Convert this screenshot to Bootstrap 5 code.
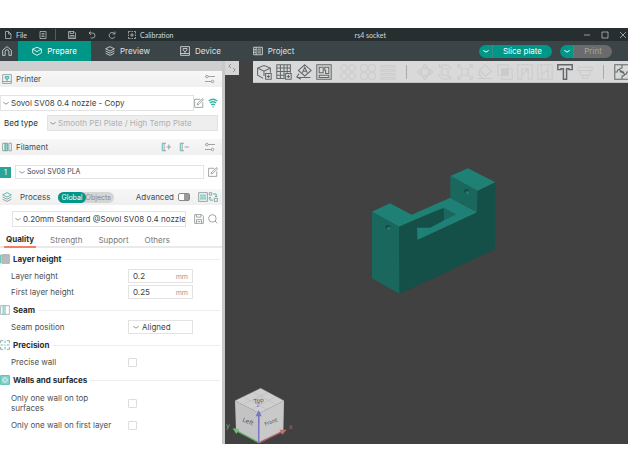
<!DOCTYPE html>
<html lang="en">
<head>
<meta charset="utf-8">
<meta name="viewport" content="width=device-width, initial-scale=1">
<title>rs4 socket</title>
<link href="https://cdn.jsdelivr.net/npm/bootstrap@5.3.0/dist/css/bootstrap.min.css" rel="stylesheet">
<style>
body{font-family:Inter,"Open Sans",sans-serif;font-size:8px;line-height:12px;color:#4a5055;background:#fff;min-height:100vh;padding:28px 0;overflow-x:hidden}
svg{display:block;flex:none}
.ico{width:10px;height:10px;fill:none;stroke:currentColor;stroke-width:1.3}
.ico-lg{width:16px;height:16px;stroke-width:1.3}
.chev{width:6px;height:4px;fill:none;stroke:#999;stroke-width:1}
.teal{stroke:#35b3a6}
button{border:0;background:none;padding:0;color:inherit;line-height:12px}
.titlebar{height:13px;background:#262e30;color:#d5d8d8;font-family:Lato,sans-serif;font-size:7px;padding:0 1px 0 4px}
.titlebar .ico{width:8px;height:8px}
.titlebar .start{gap:12px}
.titlebar .wins{gap:10px}
.vline{width:1px;height:11px;background:#555c5e}
.titlebar .vline{margin-left:-4px}
.tabsbar{height:20px;background:#3b4446;color:#dfe2e2}
.tabsbar .home{width:18px}
.maintab{width:73px;gap:5px}
.maintab.active{background:#009688;color:#fff}
.pill{height:13px;border-radius:7px;overflow:hidden;color:#fff}
.pill .chev{stroke:#fff}
.pill .drop{width:14px;background:#009688;border-right:1px solid #3b8f87}
.pill .act{background:#009688;width:59px}
.pill.off .act{background:#6b6b6b;color:#a5a5a5;width:38px}
.side{width:225px;border-right:3px solid #c9c9c9;background:#fff}
.strip{height:10px;background:#cfcfcf}
.phead{height:16px;background:linear-gradient(#f7f7f7,#efefef);padding:0 7px 0 2px;color:#444b50}
.phead .ico,.mut{color:#8b9194}
.after-head{margin-top:10px}
.tight{margin-top:6px}
.cbox{border:1px solid #e3e3e3;background:#fff;height:14px;gap:2px;padding-left:2px}
.cbox.tall{height:16px}
.cbox select,.cbox input{appearance:none;border:0;background:transparent;padding:0;color:#3c4347;font-size:inherit;line-height:12px;height:12px;min-width:0;flex:1;width:100%;outline:0;opacity:1}
.cbox.off{background:#eee}
.cbox.off select{color:#aeb1b3}
.cbox.fil{font-size:7px;padding-left:3px}
.bed-label{width:43px;color:#262e30}
.swatch{width:11px;height:11px;background:#26a69a;color:#fff;font-size:7px;line-height:11px}
.seg{background:#d5d5d5;border-radius:6px;height:11px;font-size:7px;color:#888}
.seg button{line-height:11px;padding-right:3px}
.seg .on{background:#009688;color:#fff;border-radius:6px;padding:0 3px}
.toggle{appearance:none;width:12px;height:8px;border-radius:2px;border:1px solid #888;background:linear-gradient(90deg,#fff 5px,#999 5px);margin:0}
.qtabs{height:17px;border-bottom:2px solid #eaeaea;padding-left:4px;gap:12px;color:#777;margin:4px 0 1px}
.qtabs button{height:17px;padding:0 2px}
.qtabs .on{color:#262e30;font-weight:700;border-bottom:2px solid #f28068}
.group{padding-top:2px}
.shead{height:16px;gap:3px;color:#262e30;font-weight:700;margin-bottom:1px}
.shead::after{content:"";flex:1;height:1px;background:#eee;margin-right:2px}
.frow{min-height:16px;padding-left:11px}
.frow label{width:117px;padding-right:20px;line-height:10px}
.frow .wide{padding-right:0}
.field{width:65px;padding:0 4px}
.field select{margin-left:1px}
.unit{font-size:7px;color:#999;align-self:end;line-height:10px}
.tick{appearance:none;width:9px;height:9px;border:1px solid #ddd;border-radius:1px;margin:0}
.view{background:#404140}
.collapse-btn{width:14px;height:14px;background:#d6d6d6;color:#777}
.tools{height:22px;background:#d9d9d9;color:#62686a;margin-left:14px;border-bottom:1px solid #c2c2c2;gap:4px;padding-left:3px;overflow:hidden}
.tools .dim{color:#cbcbcb}
.tools .vline{background:#aaa;height:14px;margin:0 6px}
.model{position:absolute;left:33.5%;top:26%;width:145px;height:140px}
.cube{position:absolute;left:0;bottom:0;width:85px;height:64px;font-family:"DejaVu Sans",sans-serif}
</style>
<script src="https://cdn.jsdelivr.net/npm/bootstrap@5.3.0/dist/js/bootstrap.bundle.min.js"></script>
</head>
<body class="d-flex flex-column">
<svg width="0" height="0" class="position-absolute" aria-hidden="true">
<symbol id="chev" viewBox="0 0 6 4"><path d="M.5 1Q1.500 3 3 3T5.500 1"/></symbol>
<symbol id="file" viewBox="0 0 16 16"><path d="M3 1h6l5 5v9H3zM9 1v5h5"/></symbol>
<symbol id="menu" viewBox="0 0 16 16"><path d="M2 1h12v14H2zM5 5h6M5 8h6M5 11h6"/></symbol>
<symbol id="save" viewBox="0 0 16 16"><path d="M1 1h11l3 3v11H1zM4 1v4h7V1M4 15V9h8v6M6 12h4"/></symbol>
<symbol id="undo" viewBox="0 0 16 16"><path d="M6 1 2 4l4 4M2 4h7a5 5 0 0 1 0 10H5"/></symbol>
<symbol id="redo" viewBox="0 0 16 16"><path d="M13 5A6 6 0 1 0 14 11M14 1v5H9"/></symbol>
<symbol id="calib" viewBox="0 0 16 16"><path d="M1 5V1h4M7 1h3M12 1h3v4M15 7v3M15 12v3h-3M10 15H7M5 15H1v-3M1 10V7M8 4v8M4 8h8"/></symbol>
<symbol id="home" viewBox="0 0 16 16"><path d="M1 7l7-6 7 6v8h-4V9a3 3 0 0 0-6 0v6H1z"/></symbol>
<symbol id="box" viewBox="0 0 16 16"><path d="M8 2l7 3v6l-7 4-7-4V5zM1 5l7 4 7-4"/></symbol>
<symbol id="layers" viewBox="0 0 16 16"><path d="M8 1l7 3.500-7 3.500-7-3.500zM1 8l7 3.500L15 8M1 11.500 8 15l7-3.500"/></symbol>
<symbol id="printer" viewBox="0 0 16 16"><path d="M1 1h14v14H1zM1 12h14M5 4h6v3L8 9 5 7zM8 9v3"/></symbol>
<symbol id="project" viewBox="0 0 16 16"><path d="M1 2h14v12H1zM5 2v12M1 6h4M1 10h4M7 5h6M7 8h6M7 11h6"/></symbol>
<symbol id="sliders" viewBox="0 0 16 16"><path d="M5 4h11M0 4h1M0 12h10"/><circle cx="3" cy="4" r="2"/><circle cx="12" cy="12" r="2"/></symbol>
<symbol id="edit" viewBox="0 0 16 16"><path d="M10 2H1v13h13V7M5 11l1-3 8-7 1 2-7 7z"/></symbol>
<symbol id="search" viewBox="0 0 16 16"><circle cx="7" cy="7" r="6"/><path d="M11 11l4 4"/></symbol>
</svg>

<header>
<div class="titlebar d-flex align-items-center">
 <div class="start d-flex align-items-center">
 <button class="d-flex align-items-center"><svg class="ico"><use href="#file"/></svg><span class="ps-1">File</span></button>
 <button aria-label="Menu"><svg class="ico"><use href="#menu"/></svg></button>
 <span class="vline"></span>
 <button aria-label="Save"><svg class="ico"><use href="#save"/></svg></button>
 <button aria-label="Undo"><svg class="ico"><use href="#undo"/></svg></button>
 <button aria-label="Redo"><svg class="ico"><use href="#redo"/></svg></button>
 <button class="d-flex align-items-center gap-1"><svg class="ico"><use href="#calib"/></svg>Calibration</button>
 </div>
 <span class="flex-fill text-center pe-3">rs4 socket</span>
 <div class="wins d-flex">
 <button aria-label="Minimize"><svg class="ico" viewBox="0 0 16 16"><path d="M2 8h12"/></svg></button>
 <button aria-label="Maximize"><svg class="ico" viewBox="0 0 16 16"><path d="M2 2h12v12H2z"/></svg></button>
 <button aria-label="Close"><svg class="ico" viewBox="0 0 16 16"><path d="M2 2l12 12M14 2 2 14"/></svg></button>
 </div>
</div>
<nav class="tabsbar d-flex align-items-stretch">
 <button class="home d-flex align-items-center justify-content-center pe-1" aria-label="Home"><svg class="ico"><use href="#home"/></svg></button>
 <button class="maintab active d-flex align-items-center justify-content-center"><svg class="ico"><use href="#box"/></svg>Prepare</button>
 <button class="maintab d-flex align-items-center justify-content-center"><svg class="ico"><use href="#layers"/></svg>Preview</button>
 <button class="maintab d-flex align-items-center justify-content-center"><svg class="ico"><use href="#printer"/></svg>Device</button>
 <button class="maintab d-flex align-items-center justify-content-center"><svg class="ico"><use href="#project"/></svg>Project</button>
 <div class="d-flex align-items-center gap-2 ms-auto pe-3">
  <div class="pill d-flex"><button class="drop d-flex align-items-center justify-content-center" aria-label="Slice options"><svg class="chev"><use href="#chev"/></svg></button><button class="act">Slice plate</button></div>
  <div class="pill off d-flex"><button class="drop d-flex align-items-center justify-content-center" aria-label="Print options"><svg class="chev"><use href="#chev"/></svg></button><button class="act">Print</button></div>
 </div>
</nav>
</header>

<main class="d-flex flex-fill">
<aside class="side flex-shrink-0">
 <div class="strip"></div>
 <div class="phead d-flex align-items-center"><svg class="ico" viewBox="0 0 16 16"><path d="M1 1h14v14H1zM1 12h14"/><path class="teal" fill="#8bd3cb" d="M5 4h6v3L8 9 5 7zM8 9v3"/></svg><span class="ps-1">Printer</span><button class="ms-auto" aria-label="Printer settings"><svg class="ico"><use href="#sliders"/></svg></button></div>
 <div class="d-flex align-items-center pe-1 mt-2 mut">
  <div class="cbox tall d-flex align-items-center flex-fill"><svg class="chev"><use href="#chev"/></svg><select aria-label="Printer preset"><option>Sovol SV08 0.4 nozzle - Copy</option></select></div>
  <button aria-label="Edit printer"><svg class="ico"><use href="#edit"/></svg></button>
  <button class="ms-1" aria-label="Connection"><svg class="ico teal" viewBox="0 0 16 16"><path stroke-width="2" d="M1 5q7-6 14 0M3 8q5-4 10 0M5 11q3-2 6 0M7 14h2"/></svg></button>
 </div>
 <div class="d-flex align-items-center pe-1 pt-1">
  <label for="bed" class="bed-label ps-1 me-1 text-nowrap">Bed type</label>
  <div class="cbox tall off d-flex align-items-center flex-fill"><svg class="chev"><use href="#chev"/></svg><select id="bed" disabled><option>Smooth PEI Plate / High Temp Plate</option></select></div>
 </div>
 <div class="phead d-flex align-items-center mt-2"><svg class="ico" viewBox="0 0 16 16"><path d="M1 2h4v12H1zM11 2h4v12h-4z"/><path class="teal" fill="#8bd3cb" d="M5 2h4v12H5z"/></svg><span class="ps-1">Filament</span>
  <button class="ms-auto" aria-label="Add filament"><svg class="ico" viewBox="0 0 16 16"><path class="teal" d="M5 2H2v12h3"/><path d="M8 2H5v12h3M9 8h7M12.500 4v8"/></svg></button>
  <button class="ms-2" aria-label="Remove filament"><svg class="ico" viewBox="0 0 16 16"><path class="teal" d="M5 2H2v12h3"/><path d="M8 2H5v12h3M9 8h7"/></svg></button>
  <button class="ms-3" aria-label="Filament settings"><svg class="ico"><use href="#sliders"/></svg></button></div>
 <div class="d-flex align-items-center pe-1 after-head mut">
  <span class="swatch text-center me-1">1</span>
  <div class="cbox fil d-flex align-items-center flex-fill me-1"><svg class="chev"><use href="#chev"/></svg><select aria-label="Filament preset"><option>Sovol SV08 PLA</option></select></div>
  <button aria-label="Edit filament"><svg class="ico"><use href="#edit"/></svg></button>
 </div>
 <div class="phead d-flex align-items-center after-head pe-1"><svg class="ico" viewBox="0 0 16 16"><path d="M1 8l7 3.500L15 8M1 11.500 8 15l7-3.500"/><path class="teal" d="M8 1l7 3.500-7 3.500-7-3.500z"/></svg><span class="ps-1 ms-1">Process</span>
  <div class="seg d-flex ms-2"><button class="on">Global</button><button>Objects</button></div>
  <label class="ms-auto" for="adv">Advanced</label><input type="checkbox" class="toggle ms-1" id="adv">
  <button class="ms-2" aria-label="Compare"><svg class="ico" viewBox="0 0 16 16"><path d="M1 1h14v14H1z"/><path class="teal" d="M3 5h10M3 8h10M3 11h10"/></svg></button>
  <button aria-label="Transfer"><svg class="ico" viewBox="0 0 16 16"><path d="M2 1h4v4H2zM10 10h5v5h-5z"/><path class="teal" d="M8 3h5v5M11 6l2 2 2-2M8 13H3V8M1 10l2-2 2 2"/></svg></button>
 </div>
 <div class="d-flex align-items-center tight mut ps-2 pe-1">
  <div class="cbox tall d-flex align-items-center flex-fill ms-1 me-2"><svg class="chev"><use href="#chev"/></svg><select aria-label="Process preset"><option>0.20mm Standard @Sovol SV08 0.4 nozzle</option></select></div>
  <button class="me-1" aria-label="Save preset"><svg class="ico"><use href="#save"/></svg></button><button aria-label="Search"><svg class="ico"><use href="#search"/></svg></button>
 </div>
 <div class="qtabs d-flex"><button class="on">Quality</button><button>Strength</button><button>Support</button><button>Others</button></div>

 <section class="group">
  <div class="shead d-flex align-items-center"><svg class="ico" viewBox="0 0 16 16"><path fill="#b8bcbd" stroke="#a5aaab" d="M3 1h12v14H3z"/><path class="teal" d="M1 1v14"/></svg>Layer height</div>
  <div class="frow d-flex align-items-center"><label for="lh">Layer height</label><div class="cbox field d-flex"><input id="lh" type="text" value="0.2"><span class="unit">mm</span></div></div>
  <div class="frow d-flex align-items-center"><label for="flh">First layer height</label><div class="cbox field d-flex"><input id="flh" type="text" value="0.25"><span class="unit">mm</span></div></div>
 </section>
 <section class="group">
  <div class="shead d-flex align-items-center"><svg class="ico" viewBox="0 0 16 16"><path stroke="#a5aaab" d="M1 1h14v14H1z"/><path class="teal" d="M5 1v14M8 1v14"/></svg>Seam</div>
  <div class="frow d-flex align-items-center"><label for="seam">Seam position</label><div class="cbox field d-flex align-items-center"><svg class="chev"><use href="#chev"/></svg><select id="seam"><option>Aligned</option></select></div></div>
 </section>
 <section class="group">
  <div class="shead d-flex align-items-center"><svg class="ico" viewBox="0 0 16 16"><path stroke="#8b9194" d="M1 5V1h4M11 1h4v4M15 11v4h-4M5 15H1v-4"/><path class="teal" d="M8 1v4M8 11v4M1 8h4M11 8h4M7 8h2"/></svg>Precision</div>
  <div class="frow d-flex align-items-center"><label for="pw">Precise wall</label><input class="tick" type="checkbox" id="pw"></div>
 </section>
 <section class="group">
  <div class="shead d-flex align-items-center"><svg class="ico" viewBox="0 0 16 16"><path class="teal" fill="#8bd3cb" d="M1 1h14v14H1z"/><path stroke="#fff" d="M8 4l4 4-4 4-4-4z"/></svg>Walls and surfaces</div>
  <div class="frow d-flex align-items-center py-1"><label for="w1">Only one wall on top surfaces</label><input class="tick" type="checkbox" id="w1"></div>
  <div class="frow d-flex align-items-center"><label for="w2" class="wide">Only one wall on first layer</label><input class="tick" type="checkbox" id="w2"></div>
 </section>
</aside>

<section class="view flex-fill position-relative">
 <div class="d-flex align-items-start">
  <button class="collapse-btn d-flex align-items-center justify-content-center" aria-label="Collapse sidebar"><svg class="ico" viewBox="0 0 16 16"><path d="M6 2 3 5l3 3M10 8l3 3-3 3"/></svg></button>
  <div class="tools d-flex align-items-center flex-fill">
   <button aria-label="Add"><svg class="ico ico-lg" viewBox="0 0 20 20"><path d="M9 18l-7-4V5l8-3 8 3v6M2 5l8 4 8-4M10 9v6M12 12h7v7h-7zM15.500 13.500v4M13.500 15.500h4"/></svg></button>
   <button aria-label="Add plate"><svg class="ico ico-lg" viewBox="0 0 20 20"><path d="M11 18H1V1h17v10M1 5h17M1 9.500h17M1 14h10M5.500 1v17M10 1v17M14 1v10M12 12h7v7h-7zM15.500 13.500v4M13.500 15.500h4"/></svg></button>
   <button aria-label="Orient"><svg class="ico ico-lg" viewBox="0 0 20 20"><path d="M11 1l8 7-8 7-8-7zM8 11l3-7 3 7M9 9h4M4 12l-3 4 5 3M1 17h17"/></svg></button>
   <button aria-label="Arrange"><svg class="ico ico-lg" viewBox="0 0 20 20"><path d="M1 1h18v18H1zM4 4h5v7H4zM11 4h5v8h-4V8h-1zM4 14h12v3H4z"/></svg></button>
   <span class="d-flex gap-1 ps-1 dim">
   <svg class="ico ico-lg" viewBox="0 0 20 20"><circle cx="5" cy="5" r="4"/><circle cx="15" cy="5" r="4"/><circle cx="5" cy="15" r="4"/><circle cx="15" cy="15" r="4"/></svg>
   <svg class="ico ico-lg" viewBox="0 0 20 20"><rect x="1" y="1" width="8" height="8" rx="2"/><rect x="11" y="1" width="8" height="8" rx="2"/><rect x="1" y="11" width="8" height="8" rx="2"/><rect x="11" y="11" width="8" height="8" rx="2"/></svg>
   <svg class="ico ico-lg" viewBox="0 0 20 20"><path d="M1 2h18v2H1zM1 7h18v2H1zM1 12h18v2H1zM1 17h18v2H1z"/></svg></span>
   <span class="vline"></span>
   <span class="d-flex gap-1 dim">
   <svg class="ico ico-lg" viewBox="0 0 20 20"><path d="M6 6h8v8H6zM10 0 7 4h6zM10 20l-3-4h6zM0 10l4-3v6zM20 10l-4-3v6z"/></svg>
   <svg class="ico ico-lg" viewBox="0 0 20 20"><path d="M6 6h8v8H6zM3 4a9 9 0 0 1 15 3M17 16a9 9 0 0 1-15-3M3 0v4h4M17 20v-4h-4"/></svg>
   <svg class="ico ico-lg" viewBox="0 0 20 20"><path d="M6 6h8v8H6zM1 5V1h4M15 1h4v4M19 15v4h-4M5 19H1v-4M1 1l5 5M19 1l-5 5M1 19l5-5M19 19l-5-5"/></svg>
   <svg class="ico ico-lg" viewBox="0 0 20 20"><path d="M10 1l8 8-7 6-8-7zM3 8v6l5 4M1 18h18"/></svg>
   <svg class="ico ico-lg" viewBox="0 0 20 20"><path d="M1 1h13v13H1zM6 6h13v13H6z"/><path fill="currentColor" d="M6 6h8v8H6z"/></svg>
   <svg class="ico ico-lg" viewBox="0 0 20 20"><path d="M1 19V1h18v18h-5V6H6v13zM6 14l8-8"/></svg>
   <svg class="ico ico-lg" viewBox="0 0 20 20"><path d="M1 1h18v18H1zM6 1v18M14 1v18M6 13l8-6"/></svg></span>
   <button aria-label="Text"><svg class="ico ico-lg" viewBox="0 0 20 20"><path stroke-width="1.800" d="M1 1h18v6h-4V6h-3v13H8V6H5v1H1z"/></svg></button>
   <svg class="ico ico-lg dim" viewBox="0 0 20 20"><path d="M1 4h18v4H1zM4 8v6h6M16 8v6h-6M7 14v4h6v-4"/></svg>
   <span class="vline"></span>
   <button aria-label="Assembly"><svg class="ico ico-lg" viewBox="0 0 20 20"><path d="M1 1h18v18H1zM10 1v4q-3 0-3 2t3 2v2M10 11q3 0 3 2t-3 2v4M1 10h3q0-3 2-3t2 3h4q0 3 2 3t2-3h3"/></svg></button>
  </div>
 </div>
 <svg class="model" viewBox="0 0 435 420" role="img" aria-label="Socket model">
  <path fill="#1f8175" d="M33 152 87 127 152 161 268 110 348 154 170 236 114 197zM268 45 321 22 403 64 350 90z"/>
  <path fill="#1a675e" d="M33 152 114 197 116 399 33 352zM268 45 350 90 348 154 268 110z"/>
  <path fill="#144f48" d="M114 197 168 173 170 236 348 154 350 90 403 64 402 265 116 399z"/>
  <path fill="#1f8175" d="M169 200h39L285 160 348 154 170 236z"/>
  <path fill="#144f48" d="M165 175 248 140 250 178 207 200H169z"/>
  <path fill="#1a675e" d="M248 140 286 160 250 178z"/>
  <circle cx="81" cy="199" r="7" fill="#124a43"/><circle cx="83" cy="202" r="5" fill="#1f8175"/>
  <circle cx="317" cy="91" r="7" fill="#124a43"/><circle cx="319" cy="95" r="5" fill="#1f8175"/>
 </svg>
 <svg class="cube" viewBox="15 0 255 192" role="img" aria-label="View cube">
  <path fill="#cfcfcf" d="M122 25 192 62 118 100 45 62z"/><path fill="#c3c3c3" d="M45 62 118 100 117 190 48 150z"/><path fill="#c9c9c9" d="M192 62 190 152 117 190 118 100z"/>
  <path fill="none" stroke="#aaa" stroke-width="1" d="M45 62 122 25 192 62M68 50 141 88M99 36 170 74M68 74 145 37M95 88 168 50"/>
  <g font-size="18" fill="#555"><text x="103" y="72" transform="rotate(-14 103 72)">Top</text><text x="66" y="124" transform="rotate(22 66 124)">Left</text><text x="136" y="138" transform="rotate(-20 136 138)" font-size="16">Front</text></g>
  <g stroke-width="4"><path stroke="#5fae62" d="M117 188 50 153"/><path stroke="#b36565" d="M117 188 188 154"/><path stroke="#7777c4" d="M116 188V104"/></g>
  <path fill="#6cc070" d="M38 145 58 147 49 162z"/><path fill="#c07070" d="M200 149 178 149 187 164z"/><path fill="#7777c4" d="M116 90 107 109H125z"/>
  <g font-size="20"><text x="18" y="145" fill="#6cc070">y</text><text x="206" y="148" fill="#b36565">x</text><text x="109" y="81" fill="#8888d0">z</text></g>
 </svg>
</section>
</main>
</body>
</html>
